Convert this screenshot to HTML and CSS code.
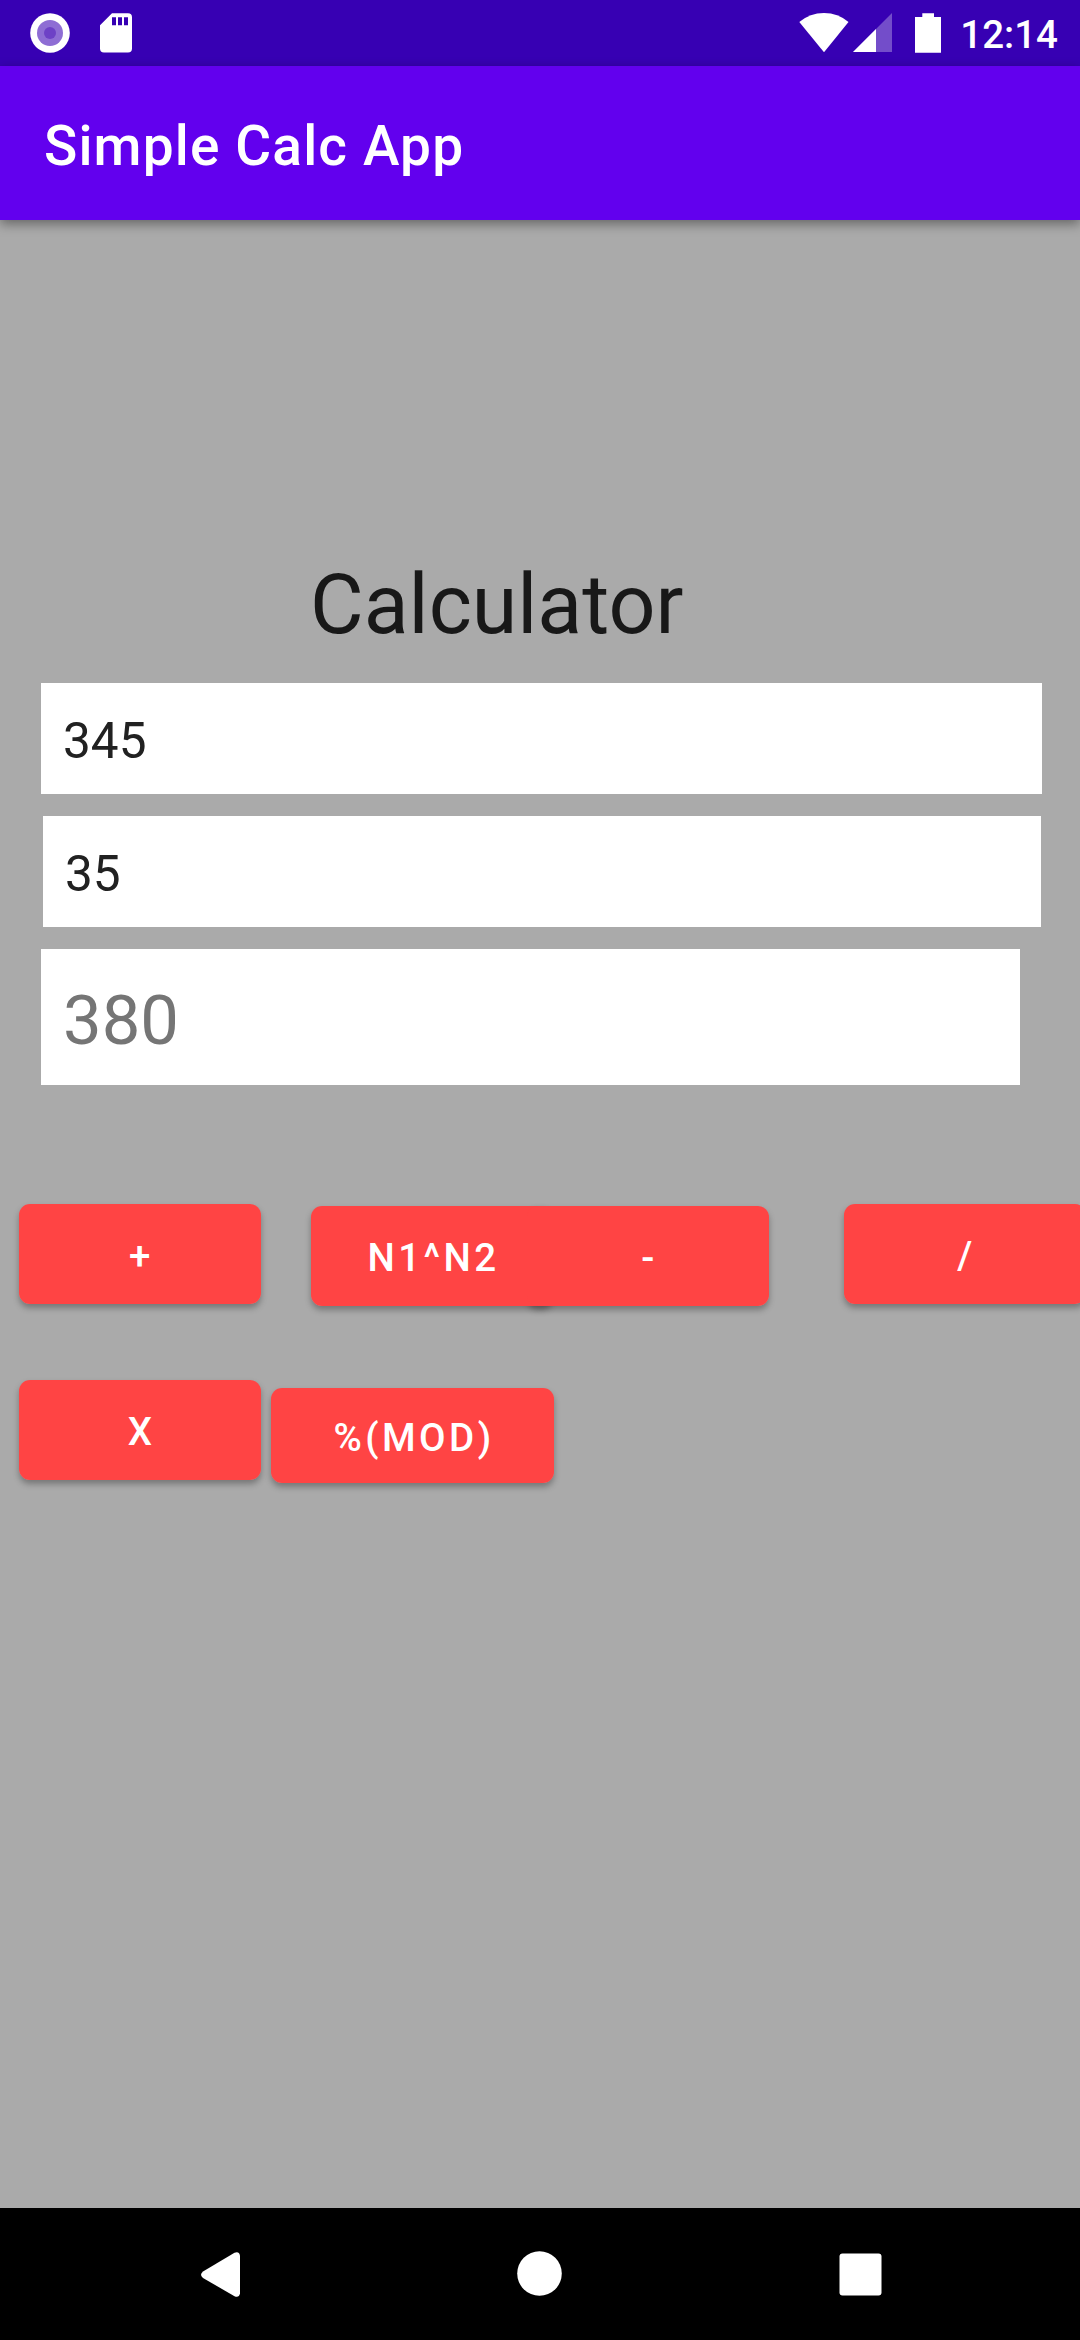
FILE: index.html
```html
<!DOCTYPE html>
<html lang="en">
<head>
<meta charset="utf-8">
<title>Simple Calc App</title>
<link rel="stylesheet" href="styles.css">
</head>
<body>
<div class="screen">
  <div class="status">
    <svg class="dot" viewBox="0 0 40 40"><circle cx="20" cy="20" r="19.8" fill="#fff"/><circle cx="20" cy="20" r="13" fill="#8e6dd4"/><circle cx="20" cy="20" r="6" fill="#6d41c6"/></svg>
    <svg class="sd" viewBox="0 0 32 40"><path fill="#fff" fill-rule="evenodd" d="M12 .3H28Q32 .3 32 4.3V35.500Q32 39.500 28 39.500H4Q0 39.500 0 35.500V12.300ZM12 4.300V12.300H16V4.300ZM18 4.300V12.300H22V4.300ZM24 4.300V12.300H28V4.300Z"/></svg>
    <div class="system">
      <svg class="wifi" viewBox="0 0 50 40"><path fill="#fff" d="M.3 9Q11 0 25 0T49.500 9L25 39.300Z"/></svg>
      <svg class="signal" viewBox="0 0 39 40"><path fill="#fff" fill-opacity=".3" d="M39 0V39H0Z"/><path fill="#fff" d="M23 16V39H0Z"/></svg>
      <svg class="battery" viewBox="0 0 26 40"><path fill="#fff" d="M7.300 .200H19V4H26V39.700H0V4H7.300Z"/></svg>
      <span class="clock">12:14</span>
    </div>
  </div>
  <header class="appbar"><h1 class="title">Simple Calc App</h1></header>
  <main class="content">
    <h2 class="heading">Calculator</h2>
    <div class="fields">
      <div class="field first">345</div>
      <div class="field second">35</div>
      <div class="field result">380</div>
    </div>
    <div class="keys">
      <div class="row">
        <button class="key">+</button>
        <button class="key power">N1^N2</button>
        <button class="key minus">-</button>
        <button class="key divide">/</button>
      </div>
      <div class="row">
        <button class="key">X</button>
        <button class="key mod">%(MOD)</button>
      </div>
    </div>
  </main>
  <nav class="navbar">
    <svg class="back" viewBox="0 0 39 45"><path fill="#fff" d="M33.500 .8Q38 -1 39 3.500V41.500Q38 46 33.500 44.200L2 26Q-2 22.800 2 19.500Z"/></svg>
    <svg class="home" viewBox="0 0 45 45"><circle cx="22.500" cy="22.500" r="22.300" fill="#fff"/></svg>
    <svg class="recent" viewBox="0 0 43 43"><rect x=".5" y=".5" width="42" height="42" rx="3" fill="#fff"/></svg>
  </nav>
</div>
</body>
</html>
```
FILE: styles.css
```css
* { box-sizing: border-box; }
body { margin: 0; font-family: Roboto, "Liberation Sans", sans-serif; }
svg { display: block; flex: none; }
.screen { width: 1080px; height: 2340px; display: flex; flex-direction: column; overflow: hidden; background: #aaa; }

.status { height: 66px; flex: none; display: flex; align-items: flex-start; padding: 13px 22px 0 30px; background: #3700b3; }
.dot { width: 40px; height: 40px; }
.sd { width: 32px; height: 40px; margin-left: 30px; }
.system { display: flex; margin-left: auto; }
.wifi { width: 50px; height: 40px; }
.signal { width: 39px; height: 40px; margin-left: 4px; }
.battery { width: 26px; height: 40px; margin-left: 23px; }
.clock { margin-left: 19px; line-height: 44px; font-size: 38.5px; font-weight: 500; color: #fff; }

.appbar { height: 154px; flex: none; display: flex; align-items: center; padding: 6px 44px 0; background: #6200ee; box-shadow: 0 4px 11px rgba(0, 0, 0, .4); }
.title { margin: 0; font-size: 55px; font-weight: 500; letter-spacing: .0208em; color: #fff; }

.content { flex: 1; padding-top: 336px; }
.heading { margin: 0 0 30px 310px; font-size: 82.500px; line-height: 97px; font-weight: 400; color: #181818; }

.fields { display: flex; flex-direction: column; gap: 22px; }
.field { height: 111px; display: flex; align-items: center; padding: 5px 22px 0; background: #fff; font-size: 49.500px; color: #212121; }
.first { margin: 0 38px 0 41px; }
.second { margin: 0 39px 0 43px; }
.result { height: 136px; margin: 0 60px 0 41px; padding-top: 7px; font-size: 68.750px; color: #757575; }

.keys { display: flex; flex-direction: column; gap: 74px; margin-top: 119px; padding-left: 19px; isolation: isolate; }
.row { display: flex; align-items: flex-start; }
.key { position: relative; flex: none; width: 242px; height: 100px; border: 0; border-radius: 11px; padding: 3px 0 0 3px; background: #f44; color: #fff; font: 500 38.500px Roboto, "Liberation Sans", sans-serif; letter-spacing: .0893em; }
/* Shadows sit beneath every key so touching keys read as one surface. */
.key::before { content: ""; position: absolute; inset: 0; z-index: -1; border-radius: 11px; box-shadow: 0 4px 6px rgba(0, 0, 0, .3); }
.power { margin: 2px 0 0 50px; }
.minus { margin: 2px 0 0 -26px; }
.divide { margin-left: 75px; }
.mod { width: 283px; height: 95px; margin: 8px 0 0 10px; }

.navbar { height: 132px; flex: none; display: flex; align-items: flex-start; padding: 43px 0 0 201px; background: #000; }
.back { width: 39px; height: 45px; margin-top: 1px; }
.home { width: 45px; height: 45px; margin-left: 277px; }
.recent { width: 43px; height: 43px; margin: 2px 0 0 277px; }
```
